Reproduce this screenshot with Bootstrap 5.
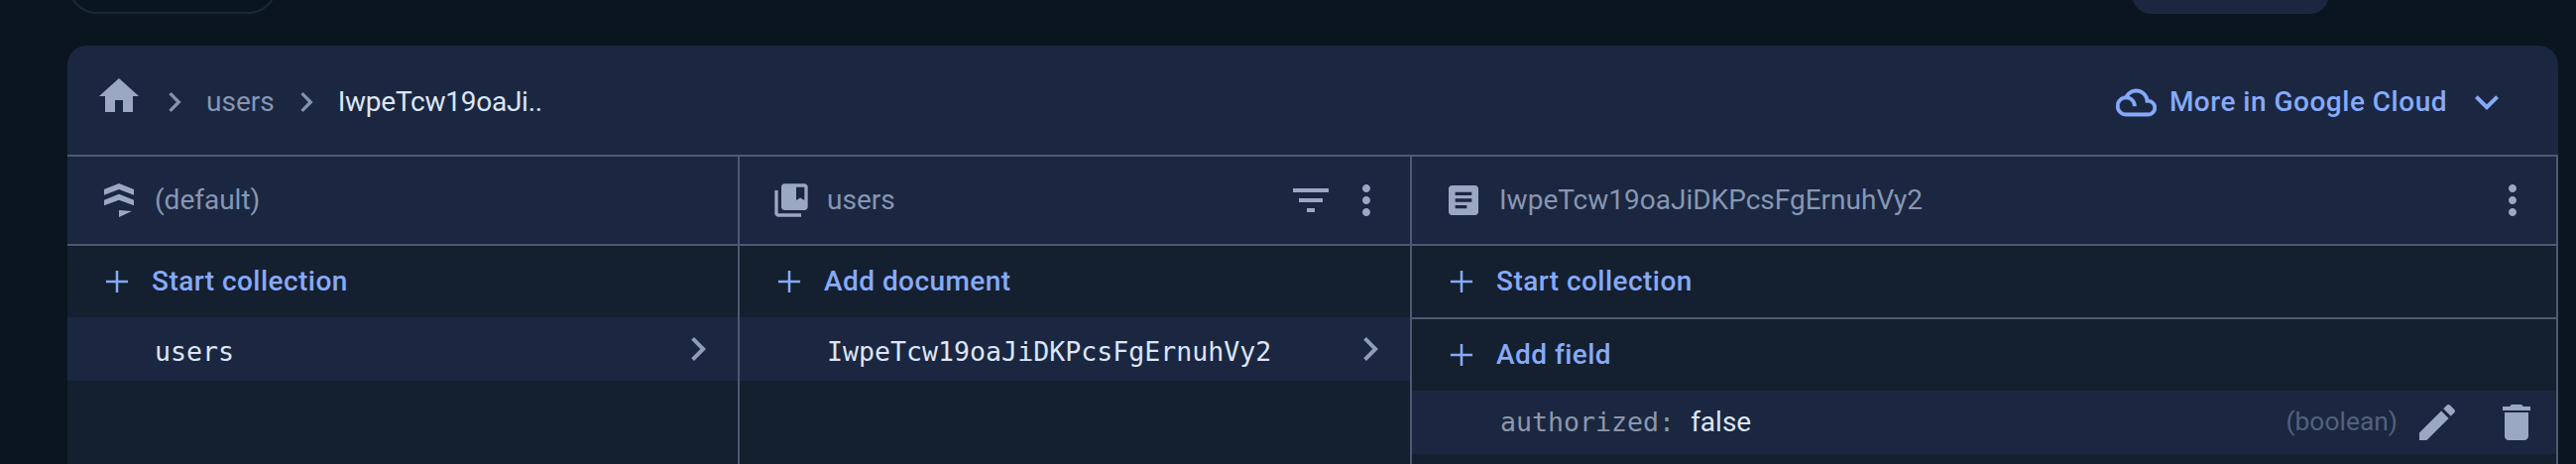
<!DOCTYPE html>
<html lang="en">
<head>
    <meta charset="UTF-8" />
    <title>Cloud Firestore</title>
    <link rel="stylesheet" href="https://cdn.jsdelivr.net/npm/bootstrap@5.3.0/dist/css/bootstrap.min.css" />
    <style>
        html, body { height: 100%; }
        body { background: #0b1520; font-family: Roboto, sans-serif; font-size: 28px; overflow: hidden; }
        svg { fill: currentColor; flex: none; display: block; }
        .top-strip { height: 46px; padding: 0 249px 0 68px; overflow: hidden; }
        .pill-stub { width: 212px; height: 60px; margin-top: -46px; border: 2px solid #1a2838; border-radius: 34px; }
        .btn-stub { width: 199px; height: 60px; margin-top: -46px; background: #1b2740; border-radius: 20px; }
        .db-panel { margin: 0 18px 0 68px; border-radius: 20px 20px 0 0; background: #141f2f; height: 422px; overflow: hidden; }
        .crumbs { height: 110px; background: #1b2740; padding: 4px 48px 0 28px; }
        .home-ico { margin-bottom: 12px; }
        .crumb-sep { color: #8392ad; margin-left: 12px; }
        .crumb-text { margin-left: 12px; }
        .crumb-muted { color: #8796b4; }
        .crumb-active { color: #dde5f8; letter-spacing: -.25px; }
        .ico { color: #9aa8c4; }
        .row-chev { color: #8e9dba; }
        .cloud-link { color: #86aaf9; font-weight: 500; letter-spacing: .5px; }
        .cloud-ico { stroke: currentColor; stroke-width: .3; }
        .cloud-text { margin-left: 13px; margin-right: 16px; }
        .cols { display: grid; grid-template-columns: 678px 678px 1fr; height: 312px; border-top: 2px solid #4d5a72; }
        .fs-col { border-right: 2px solid #4d5a72; min-width: 0; }
        .col-head { height: 88px; background: #1b2740; border-bottom: 2px solid #4d5a72; padding: 0 20px 0 32px; box-sizing: content-box; color: #8796b4; }
        .act-row { height: 72px; padding-left: 31px; color: #86aaf9; font-weight: 500; letter-spacing: .45px; }
        .act-row.ruled { border-bottom: 2px solid #4d5a72; box-sizing: content-box; }
        .item-row { height: 64px; background: #1b2740; padding: 0 16px 0 88px; color: #dde5f8; }
        .mono { font-family: "DejaVu Sans Mono", monospace; font-size: 26.6px; }
        .item-row > .mono.id-text { padding-top: 6px; }
        .field-key { color: #8a97ad; }
        .field-val { color: #dde5f8; }
        .field-type { color: #53617c; font-size: 26.4px; }
        .field-row { padding: 0 16px 0 89px; color: #dde5f8; }
        .trash-ico { margin-left: 32px; }
    </style>
</head>
<body>

<div class="top-strip d-flex justify-content-between">
    <div class="pill-stub"></div>
    <div class="btn-stub"></div>
</div>

<div class="db-panel">
    <!-- breadcrumb bar -->
    <div class="crumbs d-flex align-items-center justify-content-between">
        <div class="d-flex align-items-center">
            <svg class="ico home-ico" width="48" height="48" viewBox="0 0 24 24"><path d="M10 20v-6h4v6h5v-8h3L12 3 2 12h3v8z"/></svg>
            <svg class="crumb-sep" width="40" height="40" viewBox="0 0 24 24"><path d="M10 6L8.59 7.41 13.17 12l-4.58 4.59L10 18l6-6z"/></svg>
            <span class="crumb-muted crumb-text">users</span>
            <svg class="crumb-sep" width="40" height="40" viewBox="0 0 24 24"><path d="M10 6L8.59 7.41 13.17 12l-4.58 4.59L10 18l6-6z"/></svg>
            <span class="crumb-active crumb-text">IwpeTcw19oaJi..</span>
        </div>
        <div class="cloud-link d-flex align-items-center">
            <svg class="cloud-ico" width="41" height="41" viewBox="0 0 24 24"><path d="M19.35 10.04C18.67 6.59 15.64 4 12 4 9.11 4 6.61 5.64 5.36 8.04 2.35 8.36 0 10.9 0 14c0 3.31 2.69 6 6 6h13c2.76 0 5-2.24 5-5 0-2.64-2.05-4.78-4.65-4.96zM19 18H6c-2.21 0-4-1.79-4-4s1.79-4 4-4 4 1.79 4 4h2c0-2.76-1.86-5.08-4.4-5.78C8.61 6.88 10.2 6 12 6c3.03 0 5.5 2.47 5.5 5.5v.5H19c1.65 0 3 1.35 3 3s-1.35 3-3 3z"/></svg>
            <span class="cloud-text">More in Google Cloud</span>
            <svg width="48" height="48" viewBox="0 0 24 24"><path d="M16.59 8.59L12 13.17 7.41 8.59 6 10l6 6 6-6z"/></svg>
        </div>
    </div>

    <div class="cols">
        <!-- database column -->
        <div class="fs-col">
            <div class="col-head d-flex align-items-center">
                <svg class="ico" width="40" height="40" viewBox="0 0 40 40"><path d="M20 3l15 6v5.7L20 9 5 14.7V9zM20 13.7l15 6v5.6L20 19.7 5 25.3v-5.6zM20 30l13 1-13 6z"/></svg>
                <span class="ms-3">(default)</span>
            </div>
            <div class="act-row d-flex align-items-center">
                <svg width="38" height="38" viewBox="0 0 24 24"><path d="M19 12.8h-6.2V19h-1.6v-6.2H5v-1.6h6.2V5h1.6v6.2H19z"/></svg>
                <span class="ms-3">Start collection</span>
            </div>
            <div class="item-row d-flex align-items-center justify-content-between">
                <span class="mono id-text">users</span>
                <svg class="row-chev" width="48" height="48" viewBox="0 0 24 24"><path d="M10 6L8.59 7.41 13.17 12l-4.58 4.59L10 18l6-6z"/></svg>
            </div>
        </div>

        <!-- collection column -->
        <div class="fs-col">
            <div class="col-head d-flex align-items-center">
                <svg class="ico" width="40" height="40" viewBox="0 0 24 24"><path d="M4 6H2v14c0 1.1.9 2 2 2h14v-2H4V6zM20 2H8c-1.1 0-2 .9-2 2v12c0 1.1.9 2 2 2h12c1.1 0 2-.9 2-2V4c0-1.1-.9-2-2-2zm0 10l-2.5-1.5L15 12V4h5v8z"/></svg>
                <span class="ms-3">users</span>
                <svg class="ico ms-auto" width="48" height="48" viewBox="0 0 24 24"><path d="M10 18h4v-2h-4v2zM3 6v2h18V6H3zm3 7h12v-2H6v2z"/></svg>
                <svg class="ico ms-2" width="48" height="48" viewBox="0 0 24 24"><path d="M12 8c1.1 0 2-.9 2-2s-.9-2-2-2-2 .9-2 2 .9 2 2 2zm0 2c-1.1 0-2 .9-2 2s.9 2 2 2 2-.9 2-2-.9-2-2-2zm0 6c-1.1 0-2 .9-2 2s.9 2 2 2 2-.9 2-2-.9-2-2-2z"/></svg>
            </div>
            <div class="act-row d-flex align-items-center">
                <svg width="38" height="38" viewBox="0 0 24 24"><path d="M19 12.8h-6.2V19h-1.6v-6.2H5v-1.6h6.2V5h1.6v6.2H19z"/></svg>
                <span class="ms-3">Add document</span>
            </div>
            <div class="item-row d-flex align-items-center justify-content-between">
                <span class="mono id-text">IwpeTcw19oaJiDKPcsFgErnuhVy2</span>
                <svg class="row-chev" width="48" height="48" viewBox="0 0 24 24"><path d="M10 6L8.59 7.41 13.17 12l-4.58 4.59L10 18l6-6z"/></svg>
            </div>
        </div>

        <!-- document column -->
        <div class="fs-col">
            <div class="col-head d-flex align-items-center">
                <svg class="ico" width="40" height="40" viewBox="0 0 24 24"><path d="M19 3H5c-1.1 0-2 .9-2 2v14c0 1.1.9 2 2 2h14c1.1 0 2-.9 2-2V5c0-1.1-.9-2-2-2zm-5 14H7v-2h7v2zm3-4H7v-2h10v2zm0-4H7V7h10v2z"/></svg>
                <span class="ms-3">IwpeTcw19oaJiDKPcsFgErnuhVy2</span>
                <svg class="ico ms-auto" width="48" height="48" viewBox="0 0 24 24"><path d="M12 8c1.1 0 2-.9 2-2s-.9-2-2-2-2 .9-2 2 .9 2 2 2zm0 2c-1.1 0-2 .9-2 2s.9 2 2 2 2-.9 2-2-.9-2-2-2zm0 6c-1.1 0-2 .9-2 2s.9 2 2 2 2-.9 2-2-.9-2-2-2z"/></svg>
            </div>
            <div class="act-row ruled d-flex align-items-center">
                <svg width="38" height="38" viewBox="0 0 24 24"><path d="M19 12.8h-6.2V19h-1.6v-6.2H5v-1.6h6.2V5h1.6v6.2H19z"/></svg>
                <span class="ms-3">Start collection</span>
            </div>
            <div class="act-row d-flex align-items-center">
                <svg width="38" height="38" viewBox="0 0 24 24"><path d="M19 12.8h-6.2V19h-1.6v-6.2H5v-1.6h6.2V5h1.6v6.2H19z"/></svg>
                <span class="ms-3">Add field</span>
            </div>
            <div class="item-row field-row d-flex align-items-center">
                <span class="mono field-key">authorized:</span>
                <span class="field-val ms-3">false</span>
                <span class="field-type ms-auto">(boolean)</span>
                <svg class="ico ms-3" width="48" height="48" viewBox="0 0 24 24"><path d="M3 17.25V21h3.75L17.81 9.94l-3.75-3.75L3 17.25zM20.71 7.04c.39-.39.39-1.02 0-1.41l-2.34-2.34c-.39-.39-1.02-.39-1.41 0l-1.83 1.83 3.75 3.75 1.83-1.83z"/></svg>
                <svg class="ico trash-ico" width="48" height="48" viewBox="0 0 24 24"><path d="M6 19c0 1.1.9 2 2 2h8c1.1 0 2-.9 2-2V7H6v12zM19 4h-3.5l-1-1h-5l-1 1H5v2h14V4z"/></svg>
            </div>
        </div>
    </div>
</div>

<script src="https://cdn.jsdelivr.net/npm/bootstrap@5.3.0/dist/js/bootstrap.bundle.min.js"></script>
</body>
</html>
